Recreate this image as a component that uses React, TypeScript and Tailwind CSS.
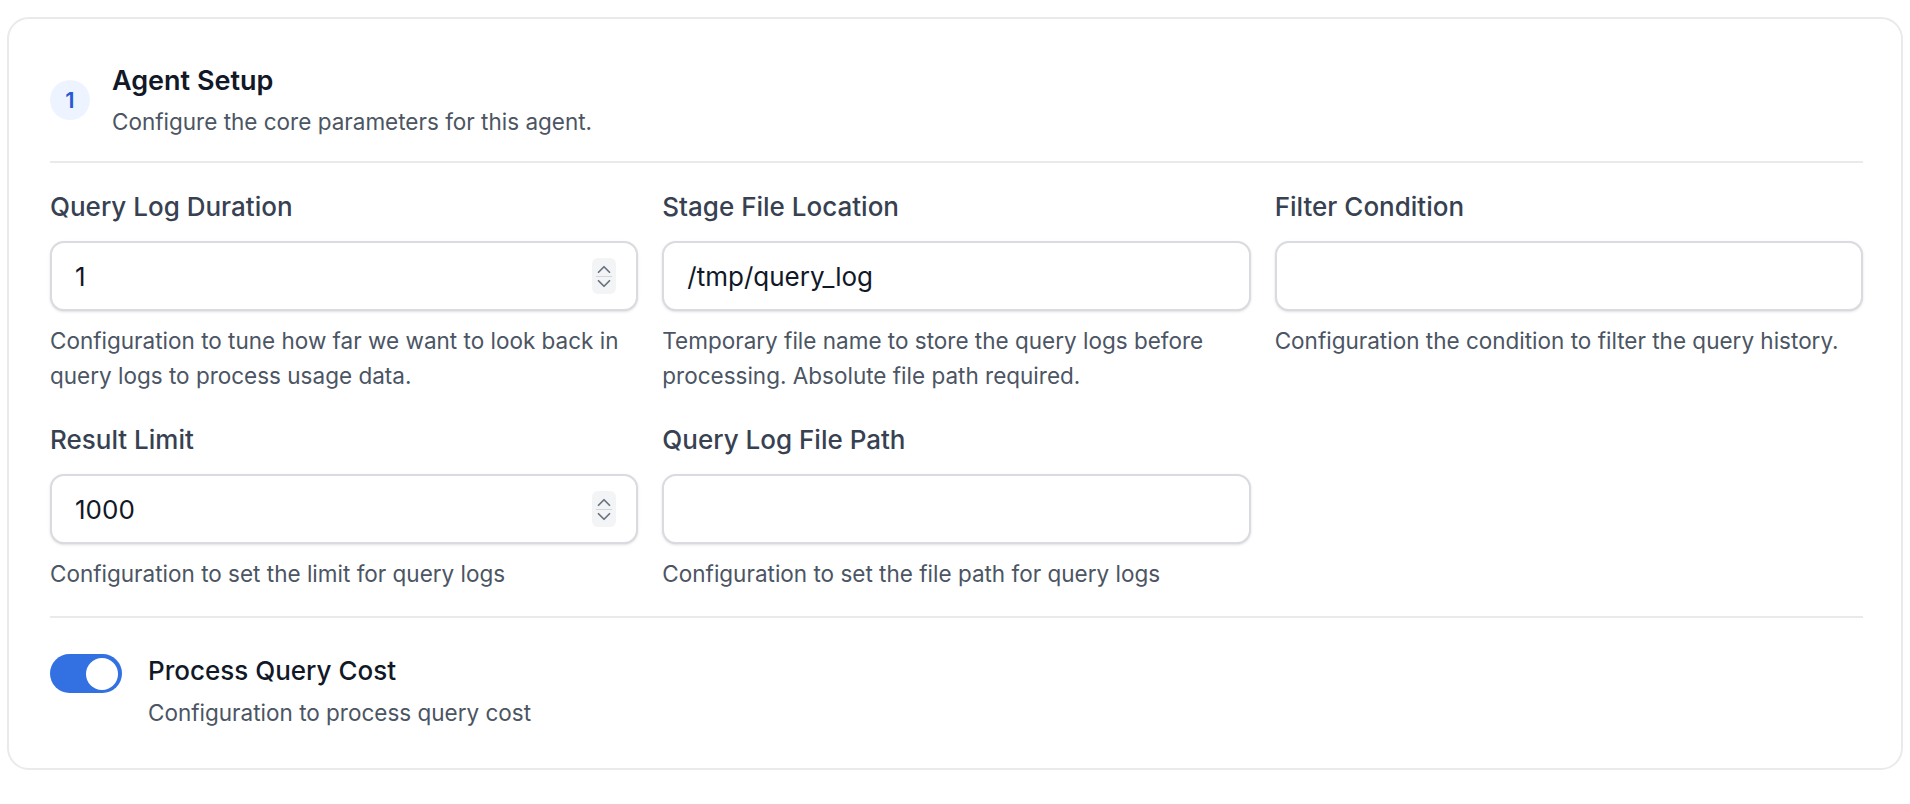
import React from "react";

function Spinner() {
  return (
    <div className="flex h-[36px] w-[24px] flex-col items-center justify-center rounded-md bg-gray-100 text-gray-500">
      <svg width="16" height="11" viewBox="0 0 14 10" fill="none" stroke="currentColor" strokeWidth="1.6" strokeLinecap="round" strokeLinejoin="round">
        <path d="M2 7.5 7 2.5 12 7.5" />
      </svg>
      <div className="my-[1px] h-px w-[16px] bg-gray-300" />
      <svg width="16" height="11" viewBox="0 0 14 10" fill="none" stroke="currentColor" strokeWidth="1.6" strokeLinecap="round" strokeLinejoin="round">
        <path d="M2 2.5 7 7.5 12 2.5" />
      </svg>
    </div>
  );
}

function Field({ label, value, help, number }: { label: string; value?: string; help: string; number?: boolean }) {
  return (
    <div className="flex flex-col">
      <div className="text-[26px] font-medium leading-[30px] text-[#374151]">{label}</div>
      <div className="mt-[19px] flex h-[70px] items-center justify-between rounded-[14px] border-2 border-[#d9dbe0] bg-white pl-[23px] pr-[20px] shadow-sm">
        <span className="text-[26px] text-[#111827]">{value}</span>
        {number && <Spinner />}
      </div>
      <div className="mt-[12px] text-[22.5px] leading-[35px] text-[#4b5563]">{help}</div>
    </div>
  );
}

export default function App() {
  return (
    <div className="min-h-screen bg-white p-[7px] pt-[17px] font-[Inter,sans-serif]">
      <div className="rounded-[22px] border-2 border-[#e9eaec] pl-[41px] pr-[38px] pt-[44px] pb-[40px]">
        <div className="flex items-center gap-[22px]">
          <div className="flex h-[40px] w-[40px] items-center justify-center rounded-full bg-[#eef4ff] text-[22px] font-semibold text-[#2559d6]">1</div>
          <div>
            <div className="text-[27px] font-semibold leading-[36px] text-[#111827]">Agent Setup</div>
            <div className="mt-[8px] text-[22.5px] leading-[30px] text-[#4b5563]">Configure the core parameters for this agent.</div>
          </div>
        </div>
        <div className="mt-[24px] h-[2px] bg-[#e9eaec]" />
        <div className="mt-[29px] grid grid-cols-3 gap-x-[24px] gap-y-[32px]">
          <Field label="Query Log Duration" value="1" number help="Configuration to tune how far we want to look back in query logs to process usage data." />
          <Field label="Stage File Location" value="/tmp/query_log" help="Temporary file name to store the query logs before processing. Absolute file path required." />
          <Field label="Filter Condition" help="Configuration the condition to filter the query history." />
          <Field label="Result Limit" value="1000" number help="Configuration to set the limit for query logs" />
          <Field label="Query Log File Path" help="Configuration to set the file path for query logs" />
        </div>
        <div className="mt-[25px] h-[2px] bg-[#e9eaec]" />
        <div className="mt-[36px] flex gap-[26px]">
          <div className="flex h-[39px] w-[72px] shrink-0 items-center justify-end rounded-full bg-[#3371e3] pr-[4px]">
            <div className="h-[32px] w-[32px] rounded-full bg-white" />
          </div>
          <div>
            <div className="text-[26px] font-medium leading-[34px] text-[#111827]">Process Query Cost</div>
            <div className="mt-[10px] text-[22.5px] leading-[30px] text-[#4b5563]">Configuration to process query cost</div>
          </div>
        </div>
      </div>
    </div>
  );
}
